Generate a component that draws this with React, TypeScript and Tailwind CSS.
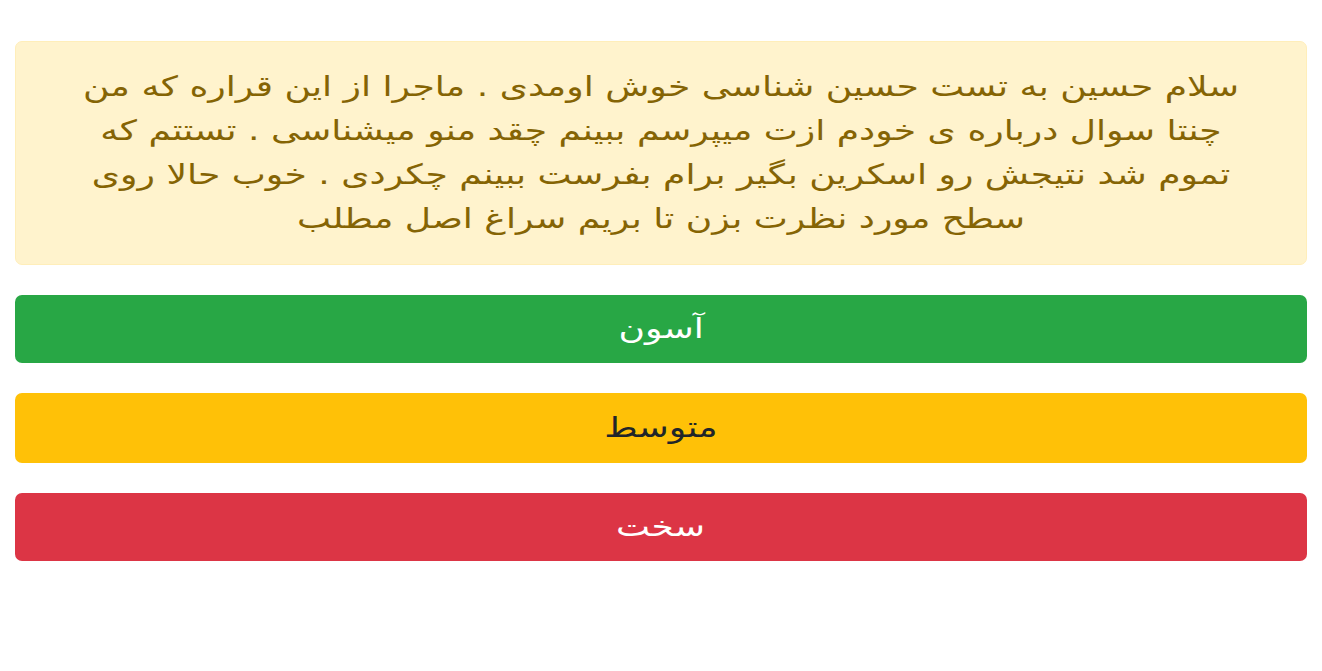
export default function App() {
  return (
    <div dir="rtl" className="bg-white min-h-[671px] px-[15px] pt-[41px] font-['DejaVu_Sans',sans-serif]">
      <div className="bg-[#fff3cd] border border-[#ffeeba] rounded-[7px] text-[#856404] text-center text-[28px] leading-[44px] py-[23px] px-[36px]">
        <div className="w-[940px] mx-auto whitespace-nowrap scale-x-[1.29]">
          سلام حسین به تست حسین شناسی خوش اومدی . ماجرا از این قراره که من
          <br />
          چنتا سوال درباره ی خودم ازت میپرسم ببینم چقد منو میشناسی . تستتم که
          <br />
          تموم شد نتیجش رو اسکرین بگیر برام بفرست ببینم چکردی . خوب حالا روی
          <br />
          سطح مورد نظرت بزن تا بریم سراغ اصل مطلب
        </div>
      </div>
      <div className="flex flex-col gap-[30px] mt-[30px]">
        <button className="h-[68px] w-full rounded-[7px] bg-[#28a745] text-white text-[28px] font-['DejaVu_Sans',sans-serif]">
          <span className="inline-block scale-x-[1.29]">آسون</span>
        </button>
        <button className="h-[70px] w-full rounded-[7px] bg-[#ffc107] text-[#212529] text-[28px] font-['DejaVu_Sans',sans-serif]">
          <span className="inline-block scale-x-[1.29]">متوسط</span>
        </button>
        <button className="h-[68px] w-full rounded-[7px] bg-[#dc3545] text-white text-[28px] font-['DejaVu_Sans',sans-serif]">
          <span className="inline-block scale-x-[1.29]">سخت</span>
        </button>
      </div>
    </div>
  );
}
